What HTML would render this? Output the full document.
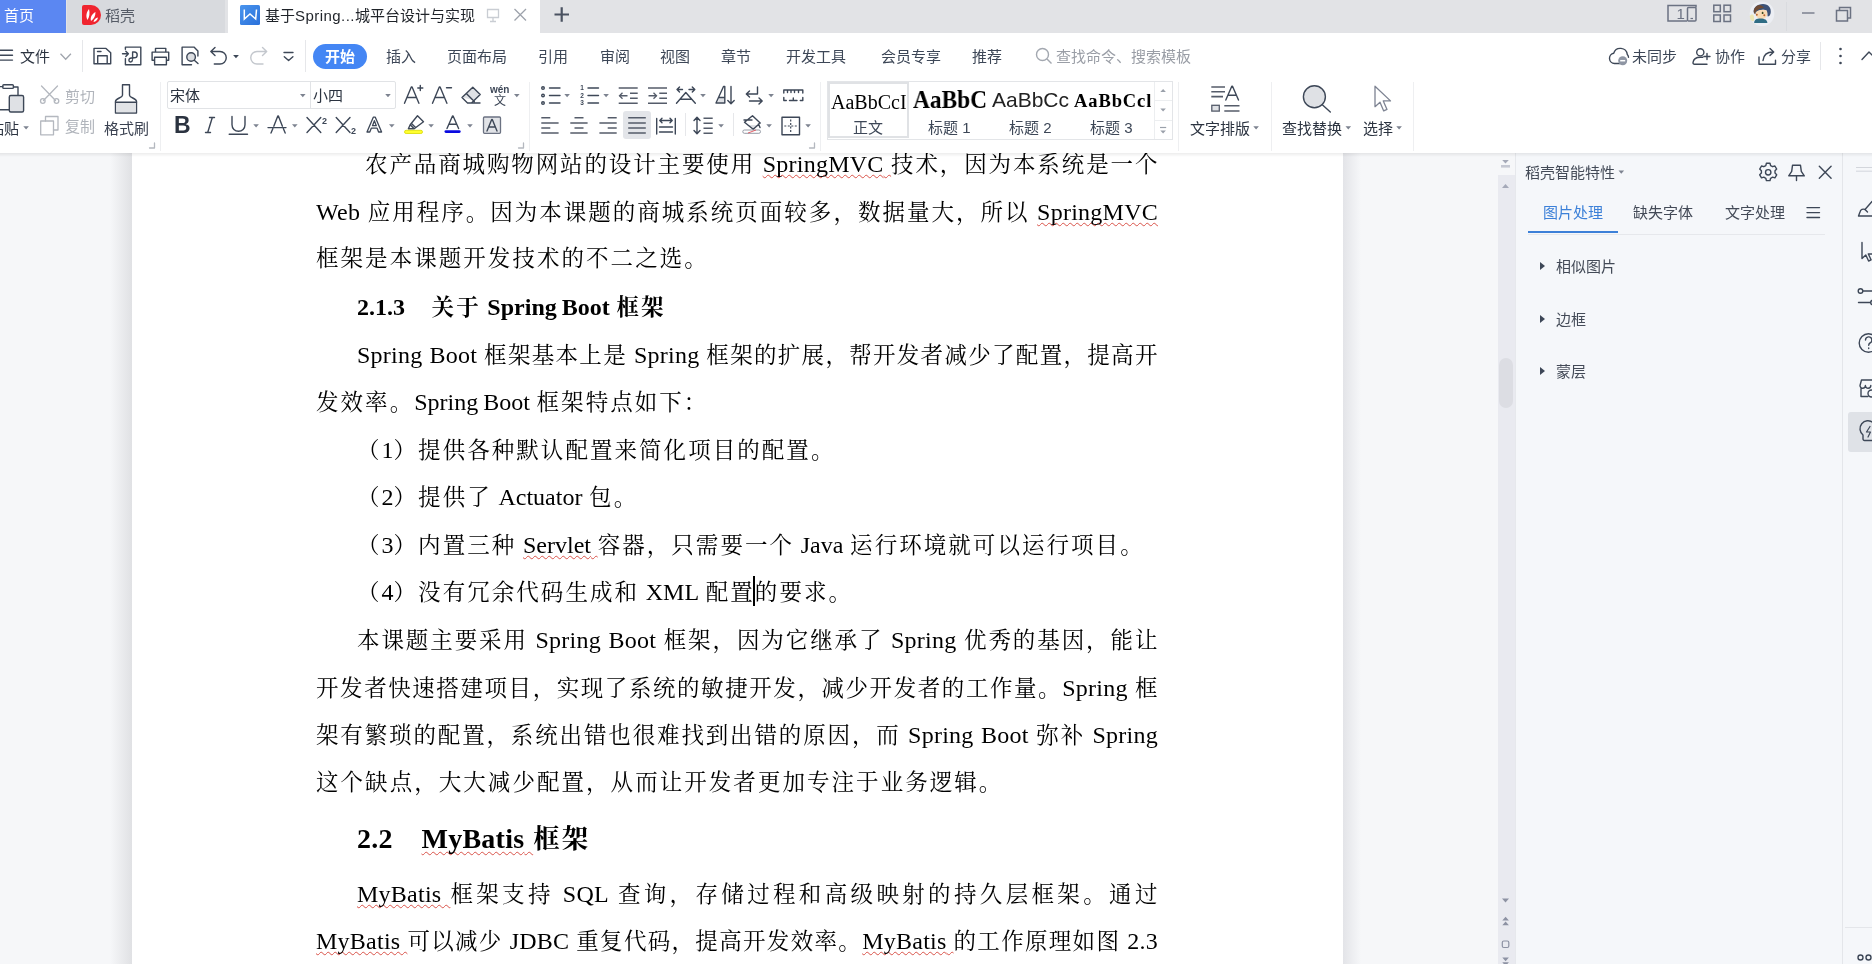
<!DOCTYPE html>
<html lang="zh-CN">
<head>
<meta charset="utf-8">
<title>基于Spring...城平台设计与实现</title>
<style>
html,body{margin:0;padding:0;}
body{width:1872px;height:964px;overflow:hidden;position:relative;background:#f6f7f9;
  font-family:"Liberation Sans","Noto Sans CJK SC",sans-serif;color:#3d4757;}
.abs{position:absolute;}
svg{position:absolute;overflow:visible;will-change:transform;}
.ui{will-change:transform;position:absolute;white-space:nowrap;font-size:15px;line-height:20px;color:#3d4757;}
/* ---------- document ---------- */
#docbg{position:absolute;left:0;top:153px;width:1516px;height:811px;background:#f6f7f9;}
#page{position:absolute;left:132px;top:153px;width:1211px;height:811px;background:#fff;}
#shl{position:absolute;left:110px;top:153px;width:22px;height:811px;background:linear-gradient(90deg,rgba(245,246,248,0),#e0e1e4);}
#shr{position:absolute;left:1343px;top:153px;width:18px;height:811px;background:linear-gradient(90deg,#e3e4e8,rgba(245,246,248,0));}
.ln{will-change:transform;position:absolute;left:316px;width:842px;height:40px;line-height:40px;font-size:24px;color:#000;white-space:nowrap;
  font-family:"Liberation Serif","Noto Serif CJK SC",serif;text-align:justify;text-align-last:justify;}
.ln.s{text-align:left;text-align-last:left;}
.ln{font-size:22.5px;letter-spacing:0.6px;font-weight:400;}
.ln.s{letter-spacing:2.05px;word-spacing:-1px;}
.s .e{letter-spacing:0;}
.e{font-size:24px;letter-spacing:0.25px;font-weight:400;}
.ln.h{font-weight:700;}
.h .e{font-weight:700;}
.ln.h2{font-size:26.5px;letter-spacing:2.2px;word-spacing:0;}
.h2 .e{letter-spacing:0.25px;}
.h2 .e{font-size:28px;}
.h2 .sq{text-underline-offset:3px;}
.ln.i{left:357px;width:801px;}
.sq{text-decoration:underline wavy #d9534a 0.6px;text-underline-offset:1.5px;text-decoration-skip-ink:none;}

/* ---------- chrome ---------- */
#tabbar{position:absolute;left:0;top:0;width:1872px;height:33px;background:#e2e3e6;}
#t1{position:absolute;left:0;top:0;width:66px;height:33px;background:#5b87f2;}
#t2{position:absolute;left:67px;top:0;width:158px;height:33px;background:#d8dade;}
#t3{position:absolute;left:228px;top:0;width:312px;height:33px;background:#fff;}
#menubar{position:absolute;left:0;top:33px;width:1872px;height:47px;background:#fff;}
#ribbon{position:absolute;left:0;top:80px;width:1872px;height:73px;background:#fff;}
.vs{position:absolute;width:1px;background:#e6e7ea;}
.g{fill:none;stroke:#3d4757;stroke-width:1.4;stroke-linecap:round;stroke-linejoin:round;}
.gl{fill:none;stroke:#c3c7cd;stroke-width:1.4;stroke-linecap:round;stroke-linejoin:round;}
.f{fill:#3d4757;stroke:none;}
.m{top:47px;}

.r2{top:120px;}
.dd{fill:#7d8390;stroke:none;}
.gg{fill:none;stroke:#b4b8bf;stroke-width:1.3;stroke-linecap:round;stroke-linejoin:round;}
.al{fill:none;stroke:#555c6a;stroke-width:1.6;stroke-linecap:butt;}
.sty{will-change:transform;position:absolute;white-space:nowrap;color:#000;overflow:hidden;height:30px;line-height:30px;}

#panel{position:absolute;left:1516px;top:153px;width:326px;height:811px;background:#f5f7fa;}
#side{position:absolute;left:1842px;top:153px;width:30px;height:811px;background:#f5f7fa;border-left:1px solid #e4e6ea;box-sizing:border-box;}
#strack{position:absolute;left:1498px;top:175px;width:17px;height:789px;background:#e9eaf0;}
#sthumb{position:absolute;left:1499px;top:358px;width:14px;height:50px;border-radius:7px;background:#dcdde3;}
#topsh{position:absolute;left:0;top:153px;width:1872px;height:4px;background:linear-gradient(180deg,rgba(0,0,0,0.07),rgba(0,0,0,0));}
.p{color:#434a57;}
</style>
</head>
<body>
<div id="docbg"></div><div id="shl"></div><div id="shr"></div>
<div id="page"></div>

<!-- document text -->
<div id="doc">
<div class="ln i" style="top:144px;left:365px;width:793px;">农产品商城购物网站的设计主要使用 <span class="sq"><span class="e">SpringMVC</span> </span>技术，因为本系统是一个</div>
<div class="ln" style="top:192px;"><span class="e">Web</span> 应用程序。因为本课题的商城系统页面较多，数据量大，所以 <span class="sq"><span class="e">SpringMVC</span></span></div>
<div class="ln s" style="top:239px;">框架是本课题开发技术的不二之选。</div>
<div class="ln s i h" style="top:287px;"><span class="e">2.1.3</span>　<span style="margin-left:2px">关</span>于 <span class="e">Spring Boot</span> 框架</div>
<div class="ln i" style="top:335px;"><span class="e">Spring Boot</span> 框架基本上是 <span class="e">Spring</span> 框架的扩展，帮开发者减少了配置，提高开</div>
<div class="ln s" style="top:382px;">发效率。<span class="e">Spring Boot</span> 框架特点如下：</div>
<div class="ln s i" style="top:430px;">（<span class="e">1</span>）提供各种默认配置来简化项目的配置。</div>
<div class="ln s i" style="top:477px;">（<span class="e">2</span>）提供了 <span class="e">Actuator</span> 包。</div>
<div class="ln s i" style="top:525px;">（<span class="e">3</span>）内置三种 <span class="sq"><span class="e">Servlet</span> </span>容器，只需要一个 <span class="e">Java</span> 运行环境就可以运行项目。</div>
<div class="ln s i" style="top:572px;">（<span class="e">4</span>）没有冗余代码生成和 <span class="e">XML</span> 配置的要求。</div>
<div class="ln i" style="top:620px;">本课题主要采用 <span class="e">Spring Boot</span> 框架，因为它继承了 <span class="e">Spring</span> 优秀的基因，能让</div>
<div class="ln" style="top:668px;">开发者快速搭建项目，实现了系统的敏捷开发，减少开发者的工作量。<span class="e">Spring</span> 框</div>
<div class="ln" style="top:715px;">架有繁琐的配置，系统出错也很难找到出错的原因，而 <span class="e">Spring Boot</span> 弥补 <span class="e">Spring</span></div>
<div class="ln s" style="top:763px;">这个缺点，大大减少配置，从而让开发者更加专注于业务逻辑。</div>
<div class="ln s i h h2" style="top:819px;"><span class="e">2.2</span>　<span class="sq"><span class="e">MyBatis</span> </span>框架</div>
<div class="ln i" style="top:874px;"><span class="sq"><span class="e">MyBatis</span> </span>框架支持 <span class="e">SQL</span> 查询，存储过程和高级映射的持久层框架。通过</div>
<div class="ln" style="top:921px;"><span class="sq"><span class="e">MyBatis</span> </span>可以减少 <span class="e">JDBC</span> 重复代码，提高开发效率。<span class="sq"><span class="e">MyBatis</span> </span>的工作原理如图 <span class="e">2.3</span></div>
</div>
<div class="abs" style="left:753px;top:576px;width:2px;height:30px;background:#000;"></div>

<!-- CHROME-TOP -->
<div id="tabbar"></div><div id="t1"></div><div id="t2"></div><div id="t3"></div>
<div id="menubar"></div><div id="ribbon"></div>
<div class="ui" style="left:4px;top:6px;color:#fff;font-size:15px;">首页</div>
<div class="ui" style="left:105px;top:6px;color:#555b66;">稻壳</div>
<div class="ui" style="left:265px;top:6px;color:#1f2329;">基于<span style="letter-spacing:0.45px">Spring...</span>城平台设计与实现</div>
<!-- menu row -->
<div class="ui m" style="left:20px;color:#2b3340;">文件</div>
<div class="abs" style="left:313px;top:44px;width:54px;height:25px;border-radius:13px;background:#4486f4;"></div>
<div class="ui m" style="left:325px;color:#fff;font-weight:bold;">开始</div>
<div class="ui m" style="left:386px;">插入</div>
<div class="ui m" style="left:447px;">页面布局</div>
<div class="ui m" style="left:538px;">引用</div>
<div class="ui m" style="left:600px;">审阅</div>
<div class="ui m" style="left:660px;">视图</div>
<div class="ui m" style="left:721px;">章节</div>
<div class="ui m" style="left:786px;">开发工具</div>
<div class="ui m" style="left:881px;">会员专享</div>
<div class="ui m" style="left:972px;">推荐</div>
<div class="ui m" style="left:1056px;color:#9a9ea6;">查找命令、搜索模板</div>
<div class="ui m" style="left:1632px;">未同步</div>
<div class="ui m" style="left:1715px;">协作</div>
<div class="ui m" style="left:1781px;">分享</div>
<div class="vs" style="left:82px;top:40px;height:32px;"></div>
<div class="vs" style="left:305px;top:40px;height:32px;"></div>
<div class="vs" style="left:1820px;top:42px;height:28px;"></div>
<div class="vs" style="left:1786px;top:2px;height:29px;background:#d9dbdf;"></div>
<svg id="ic1" width="1872" height="80" viewBox="0 0 1872 80" style="left:0;top:0;">
<!-- docer icon -->
<path d="M84 5 h7 a10 10 0 0 1 0 20 h-7 a2 2 0 0 1 -2 -2 v-16 a2 2 0 0 1 2 -2 z" fill="#f0252f"/>
<path d="M87.5 20 c-2 -4 -1 -8 1.5 -11 c1 4 0.5 8 -1.5 11 z M91 21 c-1 -4 1 -7 4.5 -9 c0 4 -1.5 7 -4.5 9 z M93.5 22 c0.5 -2.5 2 -4 4.5 -4.5 c-0.5 2.5 -2 4 -4.5 4.5 z" fill="#fff"/>
<!-- W icon -->
<defs><linearGradient id="wg" x1="0" y1="0" x2="1" y2="1"><stop offset="0" stop-color="#4a95ee"/><stop offset="1" stop-color="#2a70da"/></linearGradient></defs>
<rect x="240" y="5" width="20" height="20" rx="1.5" fill="url(#wg)"/>
<path d="M244.300 9.500 V19 L250 14 L255.700 19 L256.500 9.500" fill="none" stroke="#fff" stroke-width="1.5" stroke-linejoin="miter"/>
<!-- monitor, close, plus -->
<path d="M487.5 9.5 h11 v8 h-11 z M493 17.5 v3.5 M490 21.5 h6" fill="none" stroke="#c9cdd3" stroke-width="1.3"/>
<path d="M514.5 9 l11.5 11.5 M526 9 l-11.500 11.5" fill="none" stroke="#9da2ab" stroke-width="1.3"/>
<path d="M554.500 14.500 h14.500 M561.700 7.300 v14.500" fill="none" stroke="#4a5261" stroke-width="2.2"/>
<!-- top right -->
<g fill="none" stroke="#6b7282" stroke-width="1.5">
<path d="M1687 21 h-19 v-15.500 h28 v2"/><rect x="1687.500" y="7.500" width="8.500" height="13.500" rx="1"/><path d="M1690.500 18.500 h2.500" stroke-width="1.200"/>
<rect x="1713.800" y="5.200" width="6.500" height="6.500"/><rect x="1724" y="5.200" width="6.500" height="6.500"/><rect x="1713.800" y="15" width="6.500" height="6.500"/><rect x="1724" y="15" width="6.500" height="6.500"/>
<path d="M1802 13 h12.500" stroke-width="1.300"/>
<path d="M1839.500 10.500 v-3 h11 v10.500 h-3 M1836.500 10.500 h11 v10.500 h-11 z"/>
</g>
<text x="1676.500" y="18.500" font-size="15" fill="#6b7282" font-family="Liberation Sans, sans-serif">1</text>
<!-- avatar -->
<circle cx="1762" cy="13.800" r="12.300" fill="#eceef3"/>
<path d="M1754 13 c-1.500 -5 3 -9 9 -9 c5.500 0 8.500 4 7.700 9 c-0.500 2.500 -1.700 3.500 -3 3.500 l-1 -6 c-3 -1.500 -7 -1 -10 1.500 l-0.700 2 z" fill="#3c5278"/>
<path d="M1754 13 c-1 -4 1.500 -7 5 -8 c2 0 4 1 5 3 c-3 0 -7 1.500 -8.500 4 l-0.500 2 z" fill="#6e4a33"/>
<path d="M1755.600 12.500 c2 -2.500 6 -3.300 9.500 -2.500 c1.500 0.300 2.400 1.500 2.300 3.500 c-0.200 3.500 -2.500 5.500 -6 5.500 c-3.500 0 -5.800 -2.500 -5.800 -6.500 z" fill="#f8dab4"/>
<ellipse cx="1762.600" cy="12.900" rx="0.900" ry="1.200" fill="#3a4a22"/>
<circle cx="1756.800" cy="14.700" r="1" fill="#b8642f"/><circle cx="1764.300" cy="15.200" r="1" fill="#b8642f"/>
<path d="M1754.200 23 c0 -3 2 -4.400 6.500 -4.400 c4 0 6.500 1.500 6.700 4.400 z" fill="#2f6c84"/>
<path d="M1749.800 16.500 c0.500 -2 2.500 -2.500 3.500 -1.500 c1 1.500 1 4.500 0.500 6 c-1.500 0.500 -3 -0.500 -3.500 -2 z" fill="#ece6b4"/>
<!-- menu row icons -->
<path class="g" d="M0 50.300 h12.500 M0 55.200 h12.500 M0 60.100 h12.500"/>
<path d="M60.500 53.800 l5.200 5.500 l5.200 -5.500" fill="none" stroke="#a0a5ad" stroke-width="1.300"/>
<path class="g" d="M94 48.400 H106 L110.700 52.800 V63.800 H94 Z M97.700 63.800 V55.800 H107.200 V63.800 M97.500 51.500 H101"/>
<path class="g" d="M125.400 49.200 V47.100 H140.800 V64.700 H125.400 V58.600 M122.500 53.800 H128 M125.800 51.200 L128.400 53.800 L125.800 56.400 M132.600 59 V52 H134.300 A2.900 2.900 0 0 1 134.300 57.800 H133.200 C131 57.800 128.900 58.500 128.900 60.300 A1.700 1.700 0 0 0 132.300 60.300"/>
<path class="g" d="M155.500 51.500 V48.400 H165.800 V51.500 M154.500 60.300 H152.100 V52.100 H168.700 V60.300 H166.500 M154.600 57.300 H166.400 V64.700 H154.600 Z"/>
<path class="g" d="M197.900 56 V51 L194 47.100 H182.100 V64.700 H191.500"/><circle cx="191.100" cy="57" r="4.300" fill="#dcdee2" stroke="#3d4757" stroke-width="1.400"/><path class="g" d="M194.300 60.200 l3.700 3.400"/>
<path class="g" d="M215 47.500 L210.800 51.500 L215 55.500 M210.800 51.500 H220 A6.250 6.250 0 0 1 220 64 H214.300"/>
<path class="f" d="M233.100 55 h5.800 l-2.900 3.200 z" fill="#5a6170"/>
<path class="gl" d="M262.500 47.500 L266.700 51.500 L262.500 55.500 M266.700 51.500 H257 A6.250 6.250 0 0 0 257 64 H263"/>
<path class="g" d="M284 52.500 h9 M284.300 56.700 l4.300 3.900 l4.300 -3.900"/>
<!-- search -->
<circle cx="1042.500" cy="54.500" r="6" fill="none" stroke="#a3a8b0" stroke-width="1.400"/><path d="M1047 59 l4.500 4.500" stroke="#a3a8b0" stroke-width="1.400" fill="none"/>
<!-- cloud unsynced -->
<path class="g" d="M1620 63.500 h-5.500 a5.200 5.200 0 0 1 -0.800 -10.300 a7 7 0 0 1 13.600 1.300 a4.500 4.500 0 0 1 1.200 2.800" stroke="#5a6272"/>
<circle cx="1622.700" cy="60.700" r="4.500" fill="#8e95a3"/><path d="M1620.200 60.700 h5" stroke="#fff" stroke-width="1.500"/>
<!-- collaborate -->
<g class="g" stroke="#7a8191"><circle cx="1700.300" cy="52.300" r="3.600"/><path d="M1707 64.300 h-12.500 a1.500 1.500 0 0 1 -1.500 -1.700 c0.500 -3.800 3.500 -5.300 7.300 -5.300 h2.500 M1707 53.500 v6 M1704 56.500 h6"/></g>
<!-- share -->
<g class="g" stroke="#5a6272"><path d="M1759 57 v7.300 h16.500 v-4"/><path d="M1763 60.500 c0.500 -5.500 4 -8.500 10 -8.500 M1770 48.500 l3.700 3.500 l-3.700 3.500"/></g>
<circle cx="1840.500" cy="49" r="1.300" class="f"/><circle cx="1840.500" cy="56" r="1.300" class="f"/><circle cx="1840.500" cy="63" r="1.300" class="f"/>
<path class="g" d="M1862 59.500 l7 -7.500 l5 5" stroke-width="1.200"/>
</svg>

<!-- RIBBON -->
<div class="ui" style="left:-11px;top:119px;color:#2b3340;">粘贴</div>
<div class="ui" style="left:65px;top:87px;color:#b0b4bb;">剪切</div>
<div class="ui" style="left:65px;top:117px;color:#b0b4bb;">复制</div>
<div class="ui" style="left:104px;top:119px;color:#3a4150;">格式刷</div>
<div class="abs" style="left:167px;top:81px;width:229px;height:28px;border:1px solid #e1e3e6;box-sizing:border-box;border-radius:2px;"></div>
<div class="vs" style="left:310px;top:82px;height:26px;background:#e1e3e6;"></div>
<div class="ui" style="left:170px;top:86px;color:#2b3340;">宋体</div>
<div class="ui" style="left:313px;top:86px;color:#2b3340;">小四</div>
<div class="vs" style="left:160px;top:82px;height:69px;background:#eeeff1;"></div>
<div class="vs" style="left:529px;top:82px;height:69px;background:#eeeff1;"></div>
<div class="vs" style="left:820px;top:82px;height:69px;background:#eeeff1;"></div>
<div class="vs" style="left:1178px;top:82px;height:69px;background:#eeeff1;"></div>
<div class="vs" style="left:1271px;top:82px;height:69px;background:#eeeff1;"></div>
<div class="vs" style="left:1413px;top:82px;height:69px;background:#eeeff1;"></div>
<div class="vs" style="left:685px;top:113px;height:23px;"></div>
<div class="vs" style="left:733px;top:113px;height:23px;"></div>
<div class="abs" style="left:623px;top:111px;width:28px;height:28px;border-radius:3px;background:#e3e5e9;"></div>
<!-- style gallery -->
<div class="abs" style="left:827px;top:81px;width:346px;height:59px;border:1px solid #e3e5e8;box-sizing:border-box;"></div>
<div class="abs" style="left:828px;top:82px;width:81px;height:56px;border:2px solid #e0e2e5;box-sizing:border-box;"></div>
<div class="vs" style="left:1154px;top:82px;height:57px;background:#eceef0;"></div>
<div class="abs" style="left:1155px;top:100px;width:17px;height:1px;background:#eceef0;"></div>
<div class="abs" style="left:1155px;top:120px;width:17px;height:1px;background:#eceef0;"></div>
<div class="sty" style="left:831px;top:87px;width:76px;font:20px/30px 'Liberation Serif',serif;">AaBbCcI</div>
<div class="sty" style="left:913px;top:84px;width:84px;font:bold 26px/32px 'Liberation Serif',serif;height:32px;transform:scaleX(0.9);transform-origin:0 0;">AaBbC</div>
<div class="sty" style="left:992px;top:85px;width:77px;font:21px/30px 'Liberation Sans',sans-serif;color:#222;">AaBbCc</div>
<div class="sty" style="left:1074px;top:86px;width:77px;font:bold 18.5px/30px 'Liberation Serif',serif;letter-spacing:0.9px;">AaBbCcl</div>
<div class="ui" style="left:853px;top:118px;">正文</div>
<div class="ui" style="left:928px;top:118px;">标题 1</div>
<div class="ui" style="left:1009px;top:118px;">标题 2</div>
<div class="ui" style="left:1090px;top:118px;">标题 3</div>
<div class="ui" style="left:1190px;top:119px;color:#2b3340;">文字排版</div>
<div class="ui" style="left:1282px;top:119px;color:#2b3340;">查找替换</div>
<div class="ui" style="left:1363px;top:119px;color:#2b3340;">选择</div>
<div class="ui" style="left:174px;top:111px;font:bold 23px/28px 'Liberation Sans',sans-serif;color:#2b3340;">B</div>
<div class="ui" style="left:490px;top:83px;font:bold 10px/14px 'Liberation Sans',sans-serif;color:#3d4757;letter-spacing:0;">wén</div>
<div class="ui" style="left:494px;top:94px;font-size:12px;line-height:14px;color:#3d4757;">文</div>
<svg id="ic2" width="1872" height="153" viewBox="0 0 1872 153" style="left:0;top:0;">
<!-- paste -->
<path class="g" d="M0 109.800 h9 M18 95 v-8 h-4.500 M2.800 86.600 h-3"/><rect class="g" x="2.800" y="84.800" width="10.600" height="3.600" rx="1"/>
<rect x="9.300" y="95.500" width="14.300" height="16.500" rx="1.500" fill="#dfe1e5" stroke="#3d4757" stroke-width="1.400"/>
<path class="dd" d="M23.300 126.300 h5.600 l-2.800 3.200 z"/>
<!-- scissors -->
<g class="gg"><path d="M41.500 86 l14 14.500 M57.500 86 l-14 14.500"/><circle cx="42.800" cy="101" r="2.300"/><circle cx="56.500" cy="101" r="2.300"/></g>
<g class="gg"><path d="M45.500 121 v-4.500 h12.500 v13.500 h-4.500"/><rect x="40.700" y="121" width="12.800" height="13.800"/></g>
<!-- format painter -->
<path class="g" d="M122.500 84.800 h7 v10.500 c0 2.500 7 3 7 6 v11.700 h-21 v-11.700 c0 -3 7 -3.500 7 -6 z"/>
<path d="M116.200 103 h19.600 v9.300 h-19.600 z" fill="#e1e3e6"/><path class="g" d="M115.500 102.300 h21"/>
<path class="gg" d="M154.500 143 v5 h-5 M523.500 143 v5 h-5 M814.500 143 v5 h-5" stroke-linecap="butt" stroke-linejoin="miter"/>
<!-- font box arrows -->
<path class="dd" d="M300 94 h5.600 l-2.800 3.200 z M385.200 94 h5.600 l-2.800 3.200 z"/>
<!-- A+ A- -->
<path class="g" d="M404.500 103.300 l6.800 -16.300 h0.800 l6.800 16.300 M407 97.500 h9.500 M420.300 85.500 v5 M417.800 88 h5" />
<path class="g" d="M432.500 103.300 l6.800 -16.300 h0.800 l6.800 16.300 M435 97.500 h9.500 M446.500 87.700 h5"/>
<!-- eraser -->
<path d="M462 97.500 l10.800 -10.300 l7.400 7.300 l-5.800 5.700 z" fill="#dfe1e5"/>
<path class="g" d="M472.800 87.200 l7.400 7.300 l-8.700 8.500 h-4 l-5.500 -5.500 z M466.300 93.500 l8 8 M468 103 h12"/>
<path class="dd" d="M514 94 h5.600 l-2.800 3.200 z"/>
<!-- I U -->
<path class="g" d="M209.500 117.500 h5 M205.500 132.500 h5 M212.300 117.500 l-4.600 15" stroke-width="1.500"/>
<path class="g" d="M232 116.500 v8.300 a6.500 6.500 0 0 0 13 0 v-8.300 M229.200 134.300 h18.300" stroke-width="1.500"/>
<path class="dd" d="M253.300 124.300 h5.600 l-2.800 3.200 z"/>
<!-- A strike -->
<path class="g" d="M271 133 l1.800 -4.300 M273.800 126.200 l4 -10.200 h0.600 l4 10.200 M283.400 128.700 l1.800 4.300 M268 127.600 h18" stroke-width="1.400"/>
<path class="dd" d="M292 124.300 h5.600 l-2.800 3.200 z"/>
<!-- X2 -->
<path class="g" d="M307 117.500 l13.800 15 M320.800 117.500 l-13.800 15 M336.200 117.500 l13.800 15 M350 117.500 l-13.800 15"/>
<text x="322" y="124.300" font-size="9" font-weight="bold" fill="#3d4757" font-family="Liberation Sans, sans-serif">2</text>
<text x="351" y="133.500" font-size="9" font-weight="bold" fill="#3d4757" font-family="Liberation Sans, sans-serif">2</text>
<!-- A outline -->
<path d="M367 132 l6.300 -14.800 h2 l6.300 14.800 h-3 l-1.500 -3.800 h-5.800 l-1.500 3.800 z M372.500 125.700 h3.800 l-1.900 -5 z" fill="#fff" stroke="#3d4757" stroke-width="1.300" stroke-linejoin="round"/>
<path class="dd" d="M389 124.300 h5.600 l-2.800 3.200 z"/>
<!-- highlighter -->
<path class="g" d="M417.500 115.800 l6 6 l-9.300 7 l-4 -4 z M410.200 124.800 l-1.800 4 h5 M411.500 123.500 l4 4" stroke-width="1.300"/>
<rect x="404.500" y="130.300" width="18" height="3.200" rx="1.600" fill="#ffff2e" stroke="#d9d900" stroke-width="0.800"/>
<path class="dd" d="M428.300 124.300 h5.600 l-2.800 3.200 z"/>
<!-- A color -->
<path class="g" d="M447 128.500 l5.500 -12.500 h0.600 l5.500 12.500 M449 124.300 h7.600" stroke-width="1.400"/>
<rect x="444.500" y="130.300" width="16.200" height="2.600" rx="1.300" fill="#0a0ae0"/>
<path class="dd" d="M467.200 124.300 h5.600 l-2.800 3.200 z"/>
<!-- A boxed -->
<rect x="483.500" y="117" width="17" height="16.300" rx="1" fill="#e1e3e7" stroke="#6b7282" stroke-width="1.300"/>
<path class="g" d="M487 131 l4.700 -11.500 h0.600 l4.700 11.500 M488.800 127 h6.400" stroke-width="1.300"/>
<!-- bullets -->
<g class="g" stroke-width="1.300"><circle cx="543" cy="88" r="1.300"/><circle cx="543" cy="95.500" r="1.300"/><circle cx="543" cy="103" r="1.300"/><path d="M549.500 88 h10.500 M549.500 95.500 h10.500 M549.500 103 h10.500"/></g>
<path class="dd" d="M564.300 94 h5.600 l-2.800 3.200 z M603.300 94 h5.600 l-2.800 3.200 z"/>
<g class="g" stroke-width="1.300"><path d="M588 88 h10.500 M588 95.500 h10.500 M588 103 h10.500"/></g>
<g font-size="6.500" font-weight="bold" fill="#3d4757" font-family="Liberation Sans, sans-serif"><text x="580.200" y="90.300">1</text><text x="580.200" y="97.800">2</text><text x="580.200" y="105.300">3</text></g>
<!-- outdent / indent -->
<g class="al"><path d="M618.700 88 h19 M618.700 103.200 h19 M630 93.200 h7.700 M630 98.200 h7.700 M619.500 95.700 h8"/><path d="M622.500 92.700 l-3 3 l3 3" stroke-width="1.300"/>
<path d="M648 88 h19 M648 103.200 h19 M659.300 93.200 h7.700 M659.300 98.200 h7.700 M648.500 95.700 h8"/><path d="M653.500 92.700 l3 3 l-3 3" stroke-width="1.300"/></g>
<!-- text direction -->
<path class="g" d="M676.500 103.300 l9.300 -10.800 l9.500 10.800 M680 99.200 h11.600 M677 89.500 h5.500 M679.500 87 l-2.500 2.500 l2.500 2.500 M689 89.500 h5.500 M692.300 87 l2.500 2.500 l-2.500 2.500" stroke-width="1.300"/>
<path class="dd" d="M700.200 94 h5.600 l-2.800 3.200 z"/>
<!-- sort -->
<path d="M717.500 102.500 l1.800 -4.500 h5.500 v4.500 z" fill="#dfe1e5"/>
<path class="g" d="M716 103 l7.500 -16.500 h1.300 v16.500 z M719 97.500 h5.500 M731 86.500 v17 M727.800 100.500 l3.200 3.300 l3.200 -3.300" stroke-width="1.300"/>
<!-- enter arrows -->
<path class="g" d="M757.500 87 v7 h-11 M749.500 91 l-3.200 3 l3.200 3 M749.500 101 h12.500 M759 98 l3.200 3 l-3.200 3" stroke-width="1.300"/>
<path class="dd" d="M768.300 94 h5.600 l-2.800 3.200 z"/>
<!-- ruler -->
<path class="g" d="M783.800 93 v-3 h19 v3 M787.500 90 v2.500 M791 90 v2.500 M794.500 90 v2.500 M798.500 90 v2.500 M783.800 97.500 v3 h2.500 M802.800 97.500 v3 h-2.500 M789.500 100.500 h7.500 M793.300 98 v2.500" stroke-width="1.300" stroke-linecap="butt"/>
<!-- aligns -->
<g class="al"><path d="M541.300 117.800 h9 M541.300 123 h17.300 M541.300 128 h9 M541.300 133 h17.300"/>
<path d="M574.500 117.800 h9 M570.300 123 h17.300 M574.500 128 h9 M570.300 133 h17.300"/>
<path d="M607.700 117.800 h9 M599.400 123 h17.300 M607.700 128 h9 M599.400 133 h17.300"/>
<path d="M628.200 117.800 h17.600 M628.200 123 h17.600 M628.200 128 h17.600 M628.200 133 h17.600"/></g>
<!-- distribute -->
<path class="g" d="M656.700 118.500 v15.500 M675.300 118.500 v15.500 M660 120.500 h12 M662 118.300 l-2.200 2.200 l2.200 2.200 M670 118.300 l2.200 2.200 l-2.200 2.200 M659.500 127 h13 M659.500 132 h13" stroke-width="1.300"/>
<!-- line spacing -->
<path class="g" d="M697 117.500 v16 M694 120.500 l3 -3.300 l3 3.300 M694 130.500 l3 3.300 l3 -3.300" stroke-width="1.400"/><path class="al" d="M703.500 118.300 h9.200 M703.500 123.300 h9.200 M703.500 128.300 h9.200 M703.500 133.300 h9.200"/>
<path class="dd" d="M718.300 124.300 h5.600 l-2.800 3.200 z M766.300 124.300 h5.600 l-2.800 3.200 z M805.300 124.300 h5.600 l-2.800 3.200 z"/>
<!-- shading -->
<path d="M746.500 125 h12.500 l-5.500 4.300 z" fill="#dfe1e5"/>
<path class="g" d="M752.500 115.800 l7.700 7.300 l-7 6.200 l-8.700 -7 z M744 120 h8 M758.500 124 l1.500 3.500" stroke-width="1.300"/>
<rect x="742.800" y="130" width="17.700" height="3.300" rx="1.600" fill="#fff" stroke="#8a909c" stroke-width="0.900"/><path d="M748 133 l8 -3" stroke="#e0505a" stroke-width="0.900"/>
<!-- border -->
<rect class="g" x="782" y="117.200" width="17.500" height="17.500" stroke-width="1.400"/><path d="M790.700 119.500 v13 M784.300 126 h13" stroke="#3d4757" stroke-width="1.200" stroke-dasharray="2 1.500" fill="none"/>
<!-- gallery arrows -->
<path d="M1160.300 92 l2.800 -3 l2.800 3 z M1160.300 108.500 l2.800 3 l2.800 -3 z M1160.300 130.500 l2.800 3 l2.800 -3 z" fill="#9aa0aa"/><path d="M1160 127.500 h6.200" stroke="#9aa0aa" stroke-width="1.200"/>
<!-- text layout -->
<g class="al" stroke-width="1.400"><path d="M1211.300 87 h13.700 M1211.300 91.800 h13.700 M1211.300 96.600 h11.700 M1224.300 105.800 h15.200 M1224.300 111 h15.200"/></g>
<path class="g" d="M1225.800 100 l6 -13.800 h0.700 l6 13.800 M1228 95.300 h8.500" stroke-width="1.400"/>
<rect x="1211.800" y="105.300" width="7.500" height="5.800" fill="#dfe1e5" stroke="#555c6a" stroke-width="1.300"/>
<path class="dd" d="M1253.300 126.300 h5.600 l-2.800 3.200 z M1345.500 126.300 h5.600 l-2.800 3.200 z M1396.300 126.300 h5.600 l-2.800 3.200 z"/>
<!-- find -->
<circle cx="1314.400" cy="96.800" r="11" fill="#dfe1e5" stroke="#3d4757" stroke-width="1.400"/><path class="g" d="M1322.300 104.700 l8 7.300"/>
<!-- select -->
<path d="M1375 86.200 v20.500 l5 -4.500 l3.700 8.700 l3.300 -1.500 l-3.700 -8.500 h7.200 z" fill="#fff" stroke="#7d8392" stroke-width="1.300" stroke-linejoin="round"/>
</svg>
<!-- PANEL -->
<div id="strack"></div><div id="sthumb"></div>
<div class="abs" style="left:1515px;top:153px;width:1px;height:811px;background:#e6e8ec;"></div>
<div id="panel"></div><div id="side"></div>
<div class="abs" style="left:1848px;top:412px;width:24px;height:40px;background:#dfe2e7;border-radius:3px 0 0 3px;"></div>
<div class="abs" style="left:1845px;top:927px;width:27px;height:1px;background:#e4e6ea;"></div>
<div class="abs" style="left:1528px;top:234px;width:297px;height:1px;background:#e6e8ec;"></div>
<div class="abs" style="left:1528px;top:231px;width:90px;height:2px;background:#3c80d8;"></div>
<div class="ui p" style="left:1525px;top:163px;">稻壳智能特性</div>
<div class="ui" style="left:1543px;top:203px;color:#3c80d8;">图片处理</div>
<div class="ui p" style="left:1633px;top:203px;">缺失字体</div>
<div class="ui p" style="left:1725px;top:203px;">文字处理</div>
<div class="ui p" style="left:1556px;top:257px;">相似图片</div>
<div class="ui p" style="left:1556px;top:310px;">边框</div>
<div class="ui p" style="left:1556px;top:362px;">蒙层</div>
<div id="topsh"></div>
<svg id="ic3" width="1872" height="964" viewBox="0 0 1872 964" style="left:0;top:0;pointer-events:none;">
<path class="dd" d="M1618.500 170.500 h5.600 l-2.800 3.200 z"/>
<!-- gear -->
<g fill="none" stroke="#3d4757" stroke-width="1.400" stroke-linejoin="round"><circle cx="1768.200" cy="172.300" r="2.700"/>
<path d="M1766.400 163.300 h3.600 l0.600 2.300 l2 1.100 l2.300 -0.700 l1.800 3.100 l-1.700 1.700 v2.300 l1.700 1.700 l-1.800 3.100 l-2.300 -0.700 l-2 1.100 l-0.600 2.300 h-3.600 l-0.600 -2.300 l-2 -1.100 l-2.300 0.700 l-1.800 -3.100 l1.700 -1.700 v-2.300 l-1.700 -1.700 l1.800 -3.100 l2.300 0.700 l2 -1.100 z"/></g>
<!-- pin -->
<path class="g" d="M1792.500 165.300 h8 l0.800 6 l3 4.500 h-15.600 l3 -4.500 z M1796.500 175.800 v4.700"/>
<path class="g" d="M1819.300 166.200 l11.800 12 M1831.100 166.200 l-11.800 12" stroke-width="1.300"/>
<path class="g" d="M1807 207.600 h12.500 M1807 212.600 h12.500 M1807 217.500 h12.500" stroke-width="1.500" stroke-linecap="butt"/>
<!-- triangles -->
<path d="M1540 262 l5 4 l-5 4 z M1540 315 l5 4 l-5 4 z M1540 367 l5 4 l-5 4 z" fill="#3d4757"/>
<!-- scrollbar glyphs -->
<g fill="#a5a9b8"><path d="M1502.200 160 h6.600 l-3.300 3.600 z"/><rect x="1501" y="165" width="9" height="2.600" fill="#c5c8d3"/>
<path d="M1502 188 l3.500 -4 l3.500 4 z"/>
<path d="M1502 898.500 h7 l-3.500 4 z" fill="#8d92a3"/>
<path d="M1502.300 920.500 l3.300 -3.700 l3.300 3.700 z M1502.300 925.300 l3.300 -3.700 l3.300 3.700 z" fill="#8d92a3"/>
<path d="M1502.300 957.500 h6.600 l-3.300 3.700 z M1502.300 962.300 h6.600 l-3.300 3.700 z" fill="#8d92a3"/></g>
<rect x="1502.300" y="941" width="6.500" height="6.500" rx="1.500" fill="none" stroke="#8d92a3" stroke-width="1.200"/>
<!-- sidebar -->
<path d="M1856 167.500 h16 M1856 171.200 h16" stroke="#d3d6dc" stroke-width="1"/>
<g class="g">
<path d="M1872 201.500 l-7 8 c-2 -1 -4.500 0 -5 2.500 l-1.500 4 h14 M1865 209.500 l2.500 2.500"/>
<path d="M1862 242.500 v16 l3.800 -3.500 l2.800 6 l2.500 -1.200 l-2.800 -5.800 h4 " />
<circle cx="1860.500" cy="291" r="2.300"/><path d="M1863 291 h10 M1858.500 302.500 h12"/><circle cx="1873" cy="302.500" r="2.300"/>
<circle cx="1868.500" cy="343" r="9.300"/><path d="M1865.500 340 a3.200 3.200 0 1 1 4.500 3 c-1 0.500 -1.300 1.200 -1.300 2.300 M1868.700 348 v0.500"/>
<path d="M1860 385.500 l1.500 -5.500 h12 M1860 385.500 a2.700 2.700 0 0 0 5.400 0 a2.700 2.700 0 0 0 5.400 0 M1861 388 v8.500 h7"/><circle cx="1871.500" cy="393.500" r="3.500"/>
<path d="M1873 422.500 a8 8 0 0 0 -10 12.500 v4 a1.500 1.500 0 0 0 1.500 1.500 h8"/><path d="M1870 426.500 l-3.500 5.500 h4 l-2.500 5" stroke-width="1.200"/>
<circle cx="1860.500" cy="957.500" r="2.500"/><circle cx="1868.500" cy="957.500" r="2.500"/>
</g>
</svg>

</body>
</html>
